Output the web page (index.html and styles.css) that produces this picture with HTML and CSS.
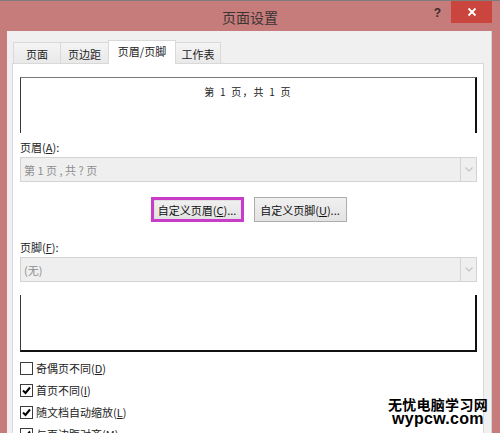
FILE: index.html
```html
<!DOCTYPE html>
<html lang="zh-CN">
<head>
<meta charset="utf-8">
<title>页面设置</title>
<link rel="stylesheet" href="styles.css">
</head>
<body>
<div class="window">
  <div class="titlebar">
    <div></div>
    <div class="title">页面设置</div>
    <div class="controls">
      <span class="help">?</span>
      <span class="close">
        <svg width="10" height="10" viewBox="0 0 10 10"><path d="M1.5 1.5 L8.5 8.5 M8.5 1.5 L1.5 8.5" stroke="#fff" stroke-width="1.8" fill="none"/></svg>
      </span>
    </div>
  </div>
  <div class="client">
    <div class="tabs">
      <div class="tab t1">页面</div>
      <div class="tab t2">页边距</div>
      <div class="tab active t3">页眉/页脚</div>
      <div class="tab t4">工作表</div>
    </div>
    <div class="panel">
      <div class="preview head">第 1 页，共 1 页</div>
      <div class="field-label">页眉(<u>A</u>):</div>
      <div class="select">
        <span class="value">第 1 页 , 共 ? 页</span>
        <span class="arrow"><svg width="8" height="5" viewBox="0 0 8 5"><path d="M0.5 0.5 L4 4 L7.5 0.5" stroke="#c4c4c4" stroke-width="1.2" fill="none"/></svg></span>
      </div>
      <div class="buttons">
        <div class="btn focus">自定义页眉(<u>C</u>)...</div>
        <div class="btn">自定义页脚(<u>U</u>)...</div>
      </div>
      <div class="field-label second">页脚(<u>F</u>):</div>
      <div class="select">
        <span class="value">(无)</span>
        <span class="arrow"><svg width="8" height="5" viewBox="0 0 8 5"><path d="M0.5 0.5 L4 4 L7.5 0.5" stroke="#c4c4c4" stroke-width="1.2" fill="none"/></svg></span>
      </div>
      <div class="preview foot"></div>
      <div class="checks">
        <div class="check"><span class="box"></span><span>奇偶页不同(<u>D</u>)</span></div>
        <div class="check"><span class="box"><svg width="11" height="11" viewBox="0 0 11 11"><path d="M2 5.5 L4.5 8 L9 2.5" stroke="#000" stroke-width="2" fill="none"/></svg></span><span>首页不同(<u>I</u>)</span></div>
        <div class="check"><span class="box"><svg width="11" height="11" viewBox="0 0 11 11"><path d="M2 5.5 L4.5 8 L9 2.5" stroke="#000" stroke-width="2" fill="none"/></svg></span><span>随文档自动缩放(<u>L</u>)</span></div>
        <div class="check"><span class="box"><svg width="11" height="11" viewBox="0 0 11 11"><path d="M2 5.5 L4.5 8 L9 2.5" stroke="#000" stroke-width="2" fill="none"/></svg></span><span>与页边距对齐(<u>M</u>)</span></div>
      </div>
    </div>
  </div>
  <div class="watermark">
    <div class="wm-cn">无忧电脑学习网</div>
    <div class="wm-en">wypcw.com</div>
  </div>
</div>
</body>
</html>
```
FILE: styles.css
```css
* { box-sizing: border-box; }
html, body { margin: 0; padding: 0; }
body {
  width: 500px;
  height: 433px;
  overflow: hidden;
  font-family: "Noto Sans CJK SC", "Liberation Sans", sans-serif;
  font-size: 11px;
  color: #1a1a1a;
  background: #c67c7a;
}
.window {
  position: relative;
  width: 500px;
  height: 433px;
  background: #c67c7a;
  border-top: 1px solid #7d7d7d;
  display: flex;
  flex-direction: column;
  overflow: hidden;
}
.titlebar {
  height: 30px;
  flex: none;
  display: grid;
  grid-template-columns: 1fr auto 1fr;
  align-items: start;
}
.title {
  font-size: 14px;
  line-height: 16px;
  margin-top: 8px;
  color: #3b3434;
}
.controls {
  display: flex;
  justify-content: flex-end;
  align-items: flex-start;
  padding-right: 8px;
}
.help {
  font-family: "Liberation Sans", sans-serif;
  font-weight: bold;
  font-size: 12px;
  line-height: 14px;
  margin-top: 5px;
  margin-right: 10px;
  color: #3a2a2a;
}
.close {
  width: 41px;
  height: 22px;
  background: #c9453d;
  display: flex;
  align-items: center;
  justify-content: center;
}
.client {
  flex: 1;
  margin: 0 8px 0 7px;
  background: #f0f0f0;
  padding: 9px 7px 0 5px;
  display: flex;
  flex-direction: column;
  border-right: 1px solid #d6d6d6;
}
.tabs {
  display: flex;
  align-items: flex-end;
  height: 23px;
  padding-left: 1px;
  flex: none;
}
.tab {
  height: 21px;
  border: 1px solid #d9d9d9;
  border-bottom: none;
  background: linear-gradient(#f4f4f4, #e9e9e9);
  display: flex;
  align-items: center;
  justify-content: center;
  margin-right: -1px;
  padding-top: 1px;
  color: #222;
}
.t1 { width: 48px; }
.t2 { width: 49px; }
.t3 { width: 68px; }
.t4 { width: 46px; }
.tab.active {
  height: 24px;
  margin-bottom: -1px;
  background: #fff;
  position: relative;
  z-index: 1;
  padding-top: 0;
  padding-bottom: 3px;
}
.panel {
  flex: 1;
  background: #fff;
  border: 1px solid #d9d9d9;
  padding: 13px 6px 0 7px;
  display: flex;
  flex-direction: column;
}
.preview {
  flex: none;
}
.preview.head {
  height: 56px;
  border-top: 1px solid #7a7a7a;
  border-left: 1px solid #3a3a3a;
  border-right: 2px solid #111;
  font-size: 10px;
  line-height: 12px;
  letter-spacing: 1.2px;
  word-spacing: 1px;
  padding-top: 8px;
  text-align: center;
  color: #222;
}
.preview.foot {
  height: 57px;
  margin-top: 13px;
  border-left: 1px solid #3a3a3a;
  border-right: 2px solid #111;
  border-bottom: 2px solid #111;
}
.field-label {
  margin-top: 6px;
  margin-bottom: 2px;
  line-height: 16px;
  color: #222;
}
.field-label.second { margin-top: 17px; }
.select {
  height: 25px;
  border: 1px solid #d3d3d3;
  background: #efefef;
  display: flex;
  align-items: stretch;
  flex: none;
}
.select .value {
  flex: 1;
  padding-left: 3px;
  display: flex;
  align-items: center;
  color: #8e8e8e;
}
.select .arrow {
  width: 16px;
  border-left: 1px solid #d3d3d3;
  display: flex;
  align-items: center;
  justify-content: center;
}
.buttons {
  margin-top: 15px;
  display: flex;
  justify-content: center;
  gap: 10px;
  flex: none;
}
.btn {
  width: 93px;
  height: 25px;
  border: 1px solid #adadad;
  background: linear-gradient(#f0f0f0, #e3e3e3);
  display: flex;
  align-items: center;
  justify-content: center;
  color: #111;
}
.btn.focus {
  border: 3px solid #c83cc8;
  box-shadow: inset 0 0 0 1px #e0e0e0;
}
.checks {
  margin-top: 5px;
  display: flex;
  flex-direction: column;
}
.check {
  height: 22px;
  display: flex;
  align-items: center;
  gap: 3px;
  color: #222;
}
.box {
  width: 13px;
  height: 13px;
  border: 1px solid #3c3c3c;
  background: #fff;
  display: flex;
  align-items: center;
  justify-content: center;
}
.watermark {
  position: absolute;
  right: 12px;
  top: 396px;
  text-align: center;
  color: #000;
  font-weight: bold;
}
.wm-cn {
  font-size: 14px;
  line-height: 15px;
  letter-spacing: 0.3px;
}
.wm-en {
  font-family: "Liberation Sans", sans-serif;
  font-size: 16px;
  line-height: 13px;
  letter-spacing: 0.3px;
}
```
